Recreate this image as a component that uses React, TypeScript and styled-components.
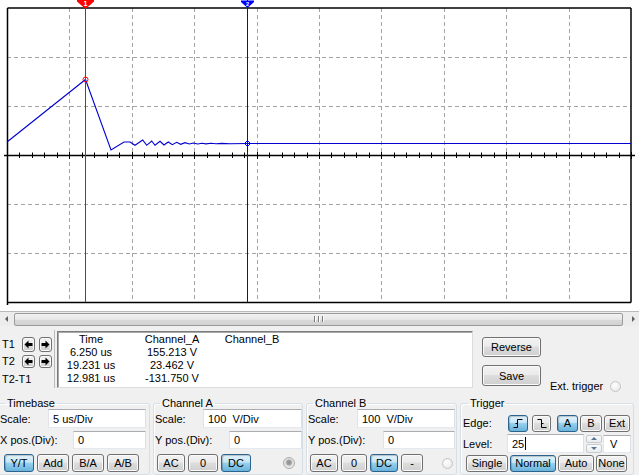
import React from "react";
import styled, { createGlobalStyle, css } from "styled-components";

const GlobalStyle = createGlobalStyle`
  html, body {
    margin: 0;
    padding: 0;
    background: #f0f0f0;
  }
  body {
    font-family: "Liberation Sans", Arial, sans-serif;
    font-size: 11px;
    color: #000;
  }
  * {
    box-sizing: border-box;
  }
`;

// plot geometry
const X0 = 7;
const X1 = 631;
const Y0 = 8;
const Y1 = 302;
const AXIS_Y = 155.5;
const DIV_X = (X1 - X0) / 10;
const DIV_Y = (Y1 - Y0) / 6;
const px = (v: number) => Math.round(v) + 0.5;

const WAVE: [number, number][] = [
  [7, 142],
  [85.5, 79.5],
  [111, 150],
  [124, 142],
  [130, 142],
  [135, 145.3],
  [142.7, 140],
  [146.7, 145.3],
  [151.7, 141],
  [155, 145.3],
  [160, 141.3],
  [164, 145],
  [168.3, 142],
  [172.3, 144.7],
  [176.7, 142.3],
  [180.7, 144.3],
  [185, 142.7],
  [189.3, 144],
  [193.3, 143],
  [197.7, 144],
  [202, 143.2],
  [206, 143.9],
  [211, 143.3],
  [216, 143.8],
  [222, 143.4],
  [230, 143.7],
  [247.5, 143.5],
  [631, 143.5],
];

const Window = styled.div`
  width: 639px;
  height: 475px;
  overflow: hidden;
  background: #f0f0f0;
  display: flex;
  flex-direction: column;
`;

const ScopeArea = styled.div`
  height: 311px;
  flex: none;
  background: #fff;

  svg {
    display: block;
  }
`;

const ScrollBar = styled.div`
  height: 15px;
  flex: none;
  display: flex;
  align-items: center;
  background: #ececec;
  border-top: 1px solid #b9b9b9;
`;

const ScrollArrow = styled.div<{ $dir: "left" | "right" }>`
  width: 12px;
  height: 13px;
  display: flex;
  align-items: center;
  justify-content: center;

  &::before {
    content: "";
    border-top: 3px solid transparent;
    border-bottom: 3px solid transparent;
    ${({ $dir }) =>
      $dir === "left"
        ? "border-right: 3px solid #606060;"
        : "border-left: 3px solid #606060;"}
  }
`;

const ScrollThumb = styled.div`
  flex: 1;
  height: 13px;
  margin: 0 4px 0 2px;
  border: 1px solid #9a9a9a;
  border-radius: 2px;
  background: linear-gradient(#f3f3f3, #e6e6e6 50%, #d9d9d9 51%, #d2d2d2);
  display: flex;
  align-items: center;
  justify-content: center;
  gap: 1px;
`;

const Grip = styled.span`
  width: 1px;
  height: 6px;
  background: #7a7a7a;
  box-shadow: 1px 0 0 #fff;
  margin: 0 1px;
`;

const CursorRow = styled.div`
  height: 66px;
  flex: none;
  display: flex;
  align-items: flex-start;
  padding-top: 4px;
`;

const TColumn = styled.div`
  width: 55px;
  height: 58px;
  border-right: 1px solid #bcbcbc;
  padding: 7px 0 0 2px;
  display: flex;
  flex-direction: column;
  gap: 3px;
`;

const TRow = styled.div<{ $h: number }>`
  height: ${({ $h }) => $h}px;
  display: flex;
  align-items: center;
`;

const TLabel = styled.span`
  min-width: 20px;
  line-height: 13px;
  white-space: nowrap;
`;

const DataBox = styled.div`
  width: 416px;
  height: 57px;
  margin: 1px 0 0 2px;
  background: #fff;
  border: 1px solid;
  border-color: #7c7c7c #dcdcdc #dcdcdc #7c7c7c;
  box-shadow: inset 1px 1px 0 #a8a8a8;
  padding-top: 1px;
  display: grid;
  grid-template-columns: 66px 96px 64px;
  grid-auto-rows: 13px;
  line-height: 13px;
`;

const Cell = styled.span`
  text-align: center;
  white-space: nowrap;
`;

const ActionColumn = styled.div`
  margin: 7px 0 0 9px;
  display: flex;
  flex-direction: column;
  gap: 8px;
`;

const ExtTrigger = styled.div`
  margin: 50px 0 0 9px;
  display: flex;
  align-items: center;
  gap: 7px;
  line-height: 13px;
`;

const Radio = styled.span<{ $size: number }>`
  width: ${({ $size }) => $size}px;
  height: ${({ $size }) => $size}px;
  border-radius: 50%;
  border: 1px solid #c4c4c4;
  background: radial-gradient(circle at 40% 35%, #ffffff, #e4e4e4);
  flex: none;
`;

const Led = styled.span`
  width: 12px;
  height: 12px;
  border-radius: 50%;
  border: 1px solid #a9a9a9;
  background: radial-gradient(circle at 50% 45%, #8c8c8c 0, #a5a5a5 2.5px, #dcdcdc 3.5px, #f4f4f4 6px);
  flex: none;
`;

const Controls = styled.div`
  display: flex;
  gap: 3px;
  margin-left: -4px;
  padding-top: 6px;
`;

const Group = styled.fieldset<{ $w: number; $pl: number; $pr: number }>`
  width: ${({ $w }) => $w}px;
  height: 77px;
  flex: none;
  margin: 0;
  padding: 0 ${({ $pr }) => $pr}px 0 ${({ $pl }) => $pl}px;
  border: 1px solid #d5dfe5;
  border-radius: 3px;
  box-shadow: inset 1px 1px 0 #fff;
  min-width: 0;
`;

const Legend = styled.legend`
  padding: 0 2px;
  margin-left: 5px;
  line-height: 11px;
  font-size: 11px;
`;

const FieldRow = styled.div<{ $h: number; $mt: number }>`
  height: ${({ $h }) => $h}px;
  margin-top: ${({ $mt }) => $mt}px;
  display: flex;
  align-items: center;
  justify-content: space-between;
`;

const TextBox = styled.div<{ $w: number; $h: number }>`
  width: ${({ $w }) => $w}px;
  height: ${({ $h }) => $h}px;
  background: #fff;
  border: 1px solid;
  border-color: #abadb3 #dbdfe6 #e3e9ef #e2e3ea;
  padding-left: 4px;
  display: flex;
  align-items: center;
  white-space: pre;
  flex: none;
`;

const Caret = styled.span`
  width: 1px;
  height: 13px;
  background: #000;
  margin-left: 1px;
`;

const ButtonRow = styled.div<{ $mt: number; $pl: number; $gap?: number }>`
  height: 18px;
  margin-top: ${({ $mt }) => $mt}px;
  padding-left: ${({ $pl }) => $pl}px;
  display: flex;
  align-items: center;
  gap: ${({ $gap }) => $gap ?? 3}px;
`;

const WinButton = styled.button<{ $w: number; $h?: number; $on?: boolean }>`
  width: ${({ $w }) => $w}px;
  height: ${({ $h }) => $h ?? 18}px;
  flex: none;
  padding: 0;
  font: inherit;
  color: #000;
  border: 1px solid #707070;
  border-radius: 3px;
  background: linear-gradient(#f2f2f2 0%, #ebebeb 45%, #dddddd 50%, #cfcfcf 100%);
  box-shadow: inset 0 0 0 1px #fafafa;
  display: inline-flex;
  align-items: center;
  justify-content: center;

  ${({ $on }) =>
    $on &&
    css`
      border-color: #2c628b;
      background: linear-gradient(#e5f4fc 0%, #c4e5f6 45%, #98d1ef 50%, #68b3db 100%);
      box-shadow: inset 1px 1px 1px rgba(0, 0, 0, 0.2);
    `}
`;

const Spinner = styled.div`
  width: 16px;
  height: 18px;
  margin-left: 2px;
  display: flex;
  flex-direction: column;
  gap: 1px;
  flex: none;
`;

const SpinHalf = styled.span<{ $up?: boolean }>`
  flex: 1;
  border: 1px solid #c6cbd2;
  border-radius: 2px;
  background: linear-gradient(#fbfbfb, #e9ecef);
  display: flex;
  align-items: center;
  justify-content: center;

  &::before {
    content: "";
    border-left: 3px solid transparent;
    border-right: 3px solid transparent;
    ${({ $up }) =>
      $up ? "border-bottom: 3px solid #5a7391;" : "border-top: 3px solid #5a7391;"}
  }
`;

const Scope: React.FC = () => {
  const vLines = Array.from({ length: 9 }, (_, i) => px(X0 + (i + 1) * DIV_X));
  const hLines = [1, 2, 4, 5].map((k) => px(Y0 + k * DIV_Y));
  const ticks = Array.from({ length: 51 }, (_, i) => ({
    x: px(X0 + (i * DIV_X) / 5),
    major: i % 5 === 0,
  }));
  const wave = WAVE.map(([x, y]) => `${x},${y}`).join(" ");

  return (
    <svg width={639} height={311} viewBox="0 0 639 311">
      <g stroke="#a4a4a4" strokeWidth={1} strokeDasharray="4 3">
        {vLines.map((x) => (
          <line key={`v${x}`} x1={x} y1={Y0} x2={x} y2={Y1} />
        ))}
        {hLines.map((y) => (
          <line key={`h${y}`} x1={X0} y1={y} x2={X1} y2={y} />
        ))}
      </g>
      <g stroke="#000" strokeWidth={1.5} fill="none">
        <line x1={X0 + 0.5} y1={Y0} x2={X1} y2={Y0} />
        <line x1={X0 + 0.5} y1={Y0} x2={X0 + 0.5} y2={Y1 + 3} />
        <line x1={X1} y1={Y0} x2={X1} y2={Y1 + 0.5} />
        <line x1={X0} y1={Y1 + 0.5} x2={X1} y2={Y1 + 0.5} />
        <line x1={4} y1={AXIS_Y} x2={635} y2={AXIS_Y} />
      </g>
      <g stroke="#000" strokeWidth={1}>
        {ticks.map(({ x, major }) => (
          <line
            key={`t${x}`}
            x1={x}
            y1={AXIS_Y - (major ? 3.5 : 3)}
            x2={x}
            y2={AXIS_Y + (major ? 3.5 : 2.5)}
          />
        ))}
      </g>
      <polyline points={wave} fill="none" stroke="#0000d0" strokeWidth={1.1} />
      <line x1={85.5} y1={0} x2={85.5} y2={Y1} stroke="#ff0000" strokeWidth={1} />
      <line x1={247.5} y1={0} x2={247.5} y2={Y1} stroke="#0000ff" strokeWidth={1} />
      <circle cx={85.5} cy={79.5} r={2.5} fill="none" stroke="#ff0000" strokeWidth={1} />
      <path d="M247.5 140.5 L250.5 143.5 L247.5 146.5 L244.5 143.5 Z" fill="none" stroke="#0000ff" strokeWidth={1} />
      <path d="M77 0 H94 V1.5 L85.5 9 L77 1.5 Z" fill="#ff0000" />
      <text x={85.5} y={6} fontSize={7} fontWeight="bold" fill="#fff" textAnchor="middle" fontFamily="Liberation Sans, sans-serif">
        1
      </text>
      <path d="M241 0.5 H254 V2 L247.5 8 L241 2 Z" fill="#0000ff" />
      <text x={247.5} y={5.5} fontSize={5.5} fontWeight="bold" fill="#fff" textAnchor="middle" fontFamily="Liberation Sans, sans-serif">
        2
      </text>
    </svg>
  );
};

const ArrowIcon: React.FC<{ dir: "left" | "right" }> = ({ dir }) => (
  <svg width={9} height={9} viewBox="0 0 9 9">
    <path
      d="M0.5 4.5 L4.5 0.5 V3 H8.5 V6 H4.5 V8.5 Z"
      fill="#000"
      transform={dir === "right" ? "translate(9 0) scale(-1 1)" : undefined}
    />
  </svg>
);

const EdgeIcon: React.FC<{ rising: boolean }> = ({ rising }) => (
  <svg width={10} height={9} viewBox="0 0 10 9" fill="none" stroke="#000" strokeWidth={1}>
    {rising ? (
      <>
        <path d="M0.5 8.5 H4.5 V0.5 H9.5" />
        <path d="M2.5 4.5 H4.5" />
      </>
    ) : (
      <>
        <path d="M0.5 0.5 H4.5 V8.5 H9.5" />
        <path d="M4.5 4.5 H6.5" />
      </>
    )}
  </svg>
);

const App: React.FC = () => (
  <>
    <GlobalStyle />
    <Window>
      <ScopeArea>
        <Scope />
      </ScopeArea>

      <ScrollBar>
        <ScrollArrow $dir="left" />
        <ScrollThumb>
          <Grip />
          <Grip />
          <Grip />
        </ScrollThumb>
        <ScrollArrow $dir="right" />
      </ScrollBar>

      <CursorRow>
        <TColumn>
          <TRow $h={15}>
            <TLabel>T1</TLabel>
            <WinButton $w={13} $h={15}>
              <ArrowIcon dir="left" />
            </WinButton>
            <WinButton $w={13} $h={15} style={{ marginLeft: 4 }}>
              <ArrowIcon dir="right" />
            </WinButton>
          </TRow>
          <TRow $h={13}>
            <TLabel>T2</TLabel>
            <WinButton $w={13} $h={13}>
              <ArrowIcon dir="left" />
            </WinButton>
            <WinButton $w={13} $h={13} style={{ marginLeft: 4 }}>
              <ArrowIcon dir="right" />
            </WinButton>
          </TRow>
          <TRow $h={16}>
            <TLabel>T2-T1</TLabel>
          </TRow>
        </TColumn>

        <DataBox>
          <Cell>Time</Cell>
          <Cell>Channel_A</Cell>
          <Cell>Channel_B</Cell>
          <Cell>6.250 us</Cell>
          <Cell>155.213 V</Cell>
          <Cell />
          <Cell>19.231 us</Cell>
          <Cell>23.462 V</Cell>
          <Cell />
          <Cell>12.981 us</Cell>
          <Cell>-131.750 V</Cell>
          <Cell />
        </DataBox>

        <ActionColumn>
          <WinButton $w={59} $h={20}>Reverse</WinButton>
          <WinButton $w={59} $h={21}>Save</WinButton>
        </ActionColumn>

        <ExtTrigger>
          <span>Ext. trigger</span>
          <Radio $size={11} />
        </ExtTrigger>
      </CursorRow>

      <Controls>
        <Group $w={154} $pl={3} $pr={3}>
          <Legend>Timebase</Legend>
          <FieldRow $h={19} $mt={0}>
            <span>Scale:</span>
            <TextBox $w={98} $h={19}>5 us/Div</TextBox>
          </FieldRow>
          <FieldRow $h={18} $mt={3}>
            <span>X pos.(Div):</span>
            <TextBox $w={73} $h={18}>0</TextBox>
          </FieldRow>
          <ButtonRow $mt={5} $pl={4} $gap={3}>
            <WinButton $w={30} $on>Y/T</WinButton>
            <WinButton $w={32}>Add</WinButton>
            <WinButton $w={32}>B/A</WinButton>
            <WinButton $w={32}>A/B</WinButton>
          </ButtonRow>
        </Group>

        <Group $w={150} $pl={1} $pr={0}>
          <Legend>Channel A</Legend>
          <FieldRow $h={19} $mt={0}>
            <span>Scale:</span>
            <TextBox $w={99} $h={19}>100  V/Div</TextBox>
          </FieldRow>
          <FieldRow $h={18} $mt={3}>
            <span>Y pos.(Div):</span>
            <TextBox $w={73} $h={18}>0</TextBox>
          </FieldRow>
          <ButtonRow $mt={5} $pl={2} $gap={3}>
            <WinButton $w={28}>AC</WinButton>
            <WinButton $w={30}>0</WinButton>
            <WinButton $w={30} $on>DC</WinButton>
            <span style={{ flex: 1 }} />
            <Led style={{ marginRight: 7 }} />
          </ButtonRow>
        </Group>

        <Group $w={151} $pl={1} $pr={1}>
          <Legend>Channel B</Legend>
          <FieldRow $h={19} $mt={0}>
            <span>Scale:</span>
            <TextBox $w={98} $h={19}>100  V/Div</TextBox>
          </FieldRow>
          <FieldRow $h={18} $mt={3}>
            <span>Y pos.(Div):</span>
            <TextBox $w={72} $h={18}>0</TextBox>
          </FieldRow>
          <ButtonRow $mt={5} $pl={2} $gap={3}>
            <WinButton $w={28}>AC</WinButton>
            <WinButton $w={26}>0</WinButton>
            <WinButton $w={28} $on>DC</WinButton>
            <WinButton $w={22}>-</WinButton>
            <span style={{ flex: 1 }} />
            <Radio $size={11} style={{ marginRight: 2 }} />
          </ButtonRow>
        </Group>

        <Group $w={174} $pl={2} $pr={2}>
          <Legend>Trigger</Legend>
          <ButtonRow $mt={5} $pl={0} $gap={0}>
            <span style={{ width: 45 }}>Edge:</span>
            <WinButton $w={20} $h={17} $on>
              <EdgeIcon rising />
            </WinButton>
            <WinButton $w={19} $h={17} style={{ marginLeft: 4 }}>
              <EdgeIcon rising={false} />
            </WinButton>
            <WinButton $w={21} $h={17} $on style={{ marginLeft: 6 }}>
              A
            </WinButton>
            <WinButton $w={22} $h={17} style={{ marginLeft: 2 }}>
              B
            </WinButton>
            <WinButton $w={26} $h={17} style={{ marginLeft: 2 }}>
              Ext
            </WinButton>
          </ButtonRow>
          <ButtonRow $mt={2} $pl={0} $gap={0} style={{ height: 19 }}>
            <span style={{ width: 44 }}>Level:</span>
            <TextBox $w={77} $h={19}>
              25
              <Caret />
            </TextBox>
            <Spinner>
              <SpinHalf $up />
              <SpinHalf />
            </Spinner>
            <TextBox $w={28} $h={18} style={{ paddingLeft: 6, marginLeft: 1 }}>
              V
            </TextBox>
          </ButtonRow>
          <ButtonRow $mt={1} $pl={3} $gap={2}>
            <WinButton $w={42} $h={17}>Single</WinButton>
            <WinButton $w={46} $h={17} $on>Normal</WinButton>
            <WinButton $w={36} $h={17}>Auto</WinButton>
            <WinButton $w={31} $h={17}>None</WinButton>
          </ButtonRow>
        </Group>
      </Controls>
    </Window>
  </>
);

export default App;
